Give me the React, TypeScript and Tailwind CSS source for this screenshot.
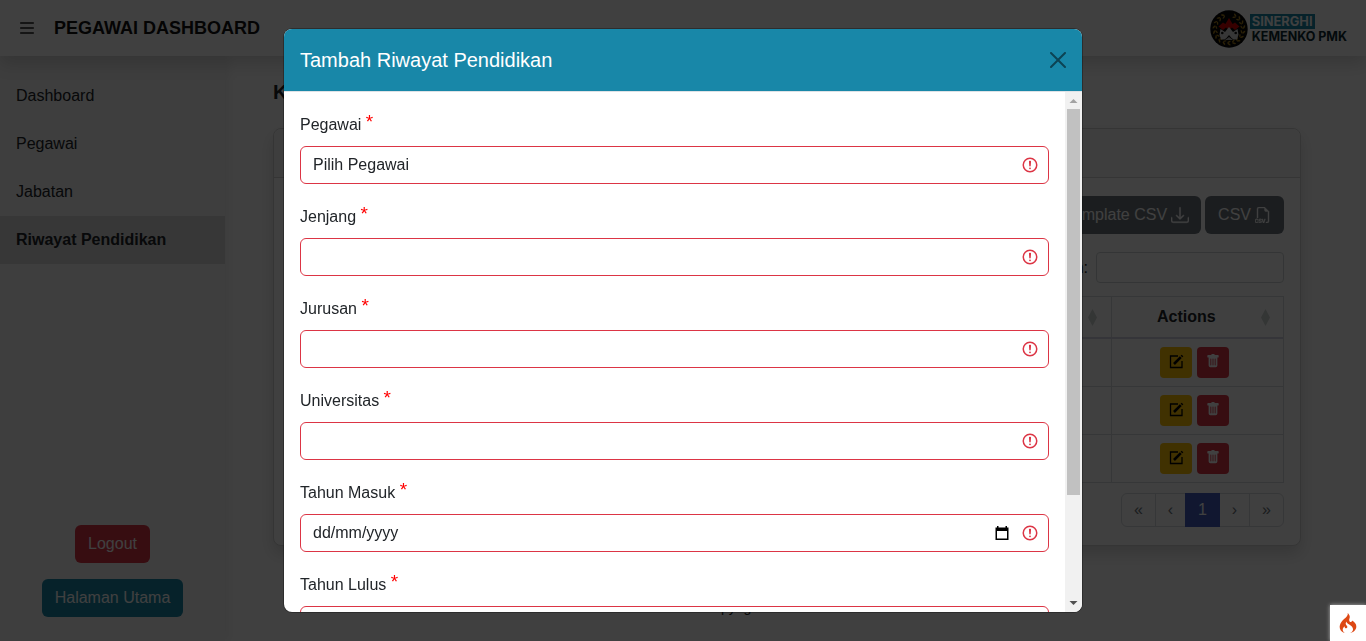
import React from "react";
import { BsDownload, BsFiletypeCsv, BsTrashFill } from "react-icons/bs";
import { FaBars } from "react-icons/fa6";
import { SiCodeigniter } from "react-icons/si";

const menu = ["Dashboard", "Pegawai", "Jabatan", "Riwayat Pendidikan"];

function Emblem() {
  const leaves = Array.from({ length: 17 }, (_, i) => 24 + i * 19.5);
  return (
    <svg className="size-[38px]" viewBox="0 0 38 38">
      <circle cx="19" cy="19" r="18.7" fill="#060606" />
      {leaves.map((a) => (
        <g key={a} transform={`rotate(${a} 19 19)`} fill="#a87f1c">
          <ellipse cx="19" cy="3.8" rx="1.9" ry="0.8" transform="rotate(35 19 3.8)" />
          <ellipse cx="19" cy="6.2" rx="1.8" ry="0.7" transform="rotate(-30 19 6.2)" />
        </g>
      ))}
      <path d="M19 8l3.600 6 2.400-1.500 4.500 4-4.500 3.500-3-2.500-3 2.500-3-2.500-3 2.500-4.500-3.500 4.500-4 2.400 1.500z" fill="#d90000" />
      <path d="M19 17l4 5 4.500-3 1 5.500-1.500 5h-3.500l-2-1.500L19 25l-2.500 3-2 1.500H11l-1.500-5 1-5.500 4.500 3z" fill="#dcdcdc" />
      <path d="M15 30l4-3 4 3z" fill="#bdbdbd" />
      <circle cx="12.300" cy="23" r="1.300" fill="#111" />
      <circle cx="25.700" cy="23" r="1.300" fill="#111" />
    </svg>
  );
}

function SortMark() {
  return (
    <svg className="h-[17px] w-[9px]" viewBox="0 0 9 17" fill="#d0d5d4">
      <path d="M4.500 0L9 8.500L4.500 17L0 8.500z" />
    </svg>
  );
}

function EditIcon() {
  return (
    <svg className="size-[15px]" viewBox="0 0 15 15" fill="none" stroke="#000">
      <path d="M9 2H1.500v11.500h11.500V7" strokeWidth="1.300" />
      <path d="M5 10l6.800-6.800" strokeWidth="2.600" />
      <path d="M12.500 2.500l1-1" strokeWidth="2.400" />
    </svg>
  );
}

function InvalidIcon() {
  return (
    <svg className="size-[18px]" viewBox="0 0 12 12" fill="none" stroke="#dc3545">
      <circle cx="6" cy="6" r="4.5" />
      <path strokeLinejoin="round" d="M5.8 3.6h.4L6 6.5z" />
      <circle cx="6" cy="8.2" r=".6" fill="#dc3545" stroke="none" />
    </svg>
  );
}

function Field({ label, value, date }: { label: string; value?: string; date?: boolean }) {
  return (
    <div className="mb-4 shrink-0">
      <div className="mb-2 flex h-[30px] items-start">
        <span className="whitespace-pre pt-[5px] leading-6">{label} </span>
        <span className="pt-[2px] text-[19px] leading-6 text-[#f00]">*</span>
      </div>
      <div className="flex h-[38px] items-center rounded-md border border-[#dc3545] pl-3 pr-[9px]">
        <span className="grow pb-px leading-6">{value}</span>
        {date && (
          <svg className="mr-[11px] size-4" viewBox="0 0 16 16">
            <path
              d="M3 1h1.500v1.500h7V1H13v1.500h1.500V15h-13V2.500H3zM3 6v7.500h10V6z"
              fill="#000"
              fillRule="evenodd"
            />
          </svg>
        )}
        <InvalidIcon />
      </div>
    </div>
  );
}

function Header() {
  return (
    <header className="relative z-10 flex h-14 shrink-0 items-center bg-white shadow-[0_8px_16px_rgba(0,0,0,0.15)]">
      <FaBars className="ml-[19px] size-4 text-[#555]" />
      <h1 className="ml-[19px] text-[18px] font-bold text-[#111]">PEGAWAI DASHBOARD</h1>
      <div className="ml-auto mr-[17px] flex items-center gap-[2px] pt-px">
        <Emblem />
        <div className="flex flex-col items-start font-[Inter] text-[12.500px] font-bold leading-[15px]">
          <span className="bg-[#1887a8] px-[2px] text-[12.800px] text-white">SINERGHI</span>
          <span className="px-[2px] text-[#0c2b31]">KEMENKO PMK</span>
        </div>
      </div>
    </header>
  );
}

function Sidebar() {
  return (
    <aside className="flex w-[225px] shrink-0 flex-col bg-[#f5f5f5] pt-4 shadow-[4px_0_10px_rgba(0,0,0,0.06)]">
      {menu.map((m, i) => (
        <div
          key={m}
          className={
            i === 3
              ? "flex h-12 items-center bg-[#dcdcdc] px-4 font-bold"
              : "flex h-12 items-center px-4"
          }
        >
          {m}
        </div>
      ))}
      <div className="mb-6 mt-auto flex flex-col items-center gap-4 text-white">
        <button className="h-[38px] rounded-md bg-[#dc3545] px-[13px]">Logout</button>
        <button className="h-[38px] rounded-md bg-[#1887a8] px-[13px]">Halaman Utama</button>
      </div>
    </aside>
  );
}

function Content() {
  return (
    <main className="flex grow flex-col pl-[48px] pr-[65px]">
      <h2 className="mt-6 text-[20px] font-bold leading-6">Kelola Riwayat Pendidikan</h2>
      <section className="mt-6 h-[418px] shrink-0 rounded-lg border border-[#d4d4d4] bg-white shadow-[0_8px_16px_rgba(0,0,0,0.15)]">
        <div className="h-[49px] rounded-t-lg border-b border-[#d4d4d4] bg-[#f7f7f7]" />
        <div className="px-4 pt-[18px]">
          <div className="flex justify-end gap-1 text-white">
            <button className="flex h-[38px] items-center gap-1 rounded-md bg-[#6c757d] px-3">
              Template CSV <BsDownload className="size-[18px]" strokeWidth="0.4" />
            </button>
            <button className="flex h-[38px] items-center gap-1 rounded-md bg-[#6c757d] px-[13px]">
              CSV <BsFiletypeCsv strokeWidth="0.4" />
            </button>
          </div>
          <div className="mt-[18px] flex items-center justify-end gap-2">
            <span>Pencarian:</span>
            <div className="h-[31px] w-[188px] rounded border border-[#d0d4d8]" />
          </div>
          <div className="mt-[13px] border border-[#d8dbdf]">
            <div className="flex h-[42px] border-b-2 border-[#d4d4e4]">
              <div className="flex grow items-center justify-end pr-[14px]">
                <SortMark />
              </div>
              <div className="flex w-[172px] items-center border-l border-[#d8dbdf] pl-[45px] pr-[13px] font-bold">
                Actions
                <span className="ml-auto">
                  <SortMark />
                </span>
              </div>
            </div>
            {[0, 1, 2].map((r) => (
              <div key={r} className="flex h-12 border-b border-[#d8dbdf] last:h-[47px] last:border-b-0">
                <div className="grow" />
                <div className="flex w-[172px] items-center gap-[5px] border-l border-[#d8dbdf] pl-[48px]">
                  <span className="flex h-[31px] w-8 items-center justify-center rounded bg-[#ffc107] pb-[3px]">
                    <EditIcon />
                  </span>
                  <span className="flex h-[31px] w-8 items-center justify-center rounded bg-[#dc3545] pb-[3px] text-[14px] text-white">
                    <BsTrashFill />
                  </span>
                </div>
              </div>
            ))}
          </div>
          <div className="mt-[10px] flex justify-end text-[#6c757d]">
            <div className="flex h-[34px] rounded-md border border-[#d8dbdf] text-center leading-[32px]">
              <span className="w-[33px]">«</span>
              <span className="w-[30px] border-l border-[#d8dbdf]">‹</span>
              <span className="-my-px w-[35px] bg-[#435ebe] leading-[34px] text-white">1</span>
              <span className="w-[29px]">›</span>
              <span className="w-[34px] border-l border-[#d8dbdf]">»</span>
            </div>
          </div>
        </div>
      </section>
      <footer className="ml-[430px] mt-[51px] text-[14px] leading-5">Copyright © 2023</footer>
    </main>
  );
}

function Modal() {
  return (
    <div className="fixed inset-0 z-20 flex justify-center bg-black/75 pt-[29px]">
      <div className="flex h-[583px] w-[798px] flex-col overflow-hidden rounded-lg bg-white shadow-[0_0_0_1px_rgba(0,0,0,0.3)]">
        <div className="flex h-[62px] shrink-0 items-center justify-between bg-[#1887a8] px-4">
          <h5 className="text-[20px] text-white">Tambah Riwayat Pendidikan</h5>
          <svg className="size-4 opacity-50" viewBox="0 0 16 16">
            <path d="M.293.293a1 1 0 0 1 1.414 0L8 6.586 14.293.293a1 1 0 1 1 1.414 1.414L9.414 8l6.293 6.293a1 1 0 0 1-1.414 1.414L8 9.414l-6.293 6.293a1 1 0 0 1-1.414-1.414L6.586 8 .293 1.707a1 1 0 0 1 0-1.414z" />
          </svg>
        </div>
        <div className="flex min-h-0 grow border-t border-[#dee2e6]">
          <div className="flex grow flex-col overflow-hidden px-4 pt-4">
            <Field label="Pegawai" value="Pilih Pegawai" />
            <Field label="Jenjang" />
            <Field label="Jurusan" />
            <Field label="Universitas" />
            <Field label="Tahun Masuk" value="dd/mm/yyyy" date />
            <Field label="Tahun Lulus" />
          </div>
          <div className="flex w-[17px] shrink-0 flex-col items-center bg-[#f1f1f1]">
            <svg className="h-[17px] w-[17px] shrink-0" viewBox="0 0 17 17">
              <path d="M4.500 11l4-4 4 4z" fill="#a3a3a3" />
            </svg>
            <div className="h-[386px] w-[13px] shrink-0 bg-[#c1c1c1]" />
            <svg className="mt-auto h-[17px] w-[17px] shrink-0" viewBox="0 0 17 17">
              <path d="M4.500 6l4 4 4-4z" fill="#505050" />
            </svg>
          </div>
        </div>
      </div>
    </div>
  );
}

export default function App() {
  return (
    <div className="flex h-[641px] w-full flex-col overflow-hidden bg-white font-['Liberation_Sans',Arial,sans-serif] text-[16px] text-[#212529]">
      <Header />
      <div className="flex min-h-0 grow">
        <Sidebar />
        <Content />
      </div>
      <Modal />
      <div className="fixed bottom-0 right-0 z-30 flex size-9 items-center justify-center bg-white shadow-[0_0_4px_rgba(255,255,255,0.6)]">
        <SiCodeigniter className="size-5 text-[#dd4814]" />
      </div>
    </div>
  );
}
